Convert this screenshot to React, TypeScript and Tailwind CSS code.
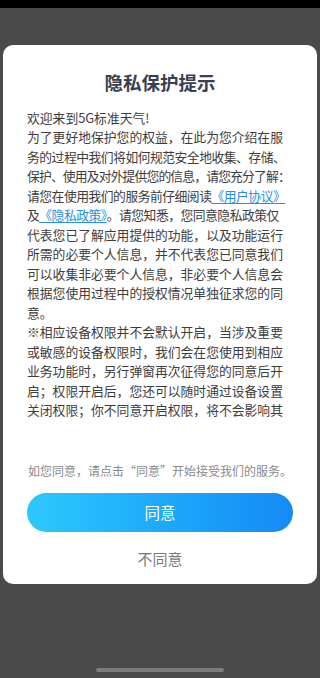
import React from 'react'

const font = { fontFamily: '"Noto Sans CJK SC", "Noto Sans", sans-serif' }

type Line = { text: React.ReactNode; tight?: 1 | 2 }

function Link({ children }: { children: React.ReactNode }) {
  return <span className="text-[#2b8ee0] underline underline-offset-2">{children}</span>
}

// lines broken as in the screenshot
const lines: Line[] = [
  { text: '欢迎来到5G标准天气!' },
  { text: '为了更好地保护您的权益，在此为您介绍在服' },
  { text: '务的过程中我们将如何规范安全地收集、存储、', tight: 1 },
  { text: '保护、使用及对外提供您的信息，请您充分了解：', tight: 2 },
  {
    text: (
      <>
        请您在使用我们的服务前仔细阅读<Link>《用户协议》</Link>
      </>
    ),
    tight: 1,
  },
  {
    text: (
      <>
        及<Link>《隐私政策》</Link>。请您知悉，您同意隐私政策仅
      </>
    ),
    tight: 1,
  },
  { text: '代表您已了解应用提供的功能，以及功能运行' },
  { text: '所需的必要个人信息，并不代表您已同意我们' },
  { text: '可以收集非必要个人信息，非必要个人信息会' },
  { text: '根据您使用过程中的授权情况单独征求您的同' },
  { text: '意。' },
  { text: '※相应设备权限并不会默认开启，当涉及重要' },
  { text: '或敏感的设备权限时，我们会在您使用到相应' },
  { text: '业务功能时，另行弹窗再次征得您的同意后开' },
  { text: '启；权限开启后，您还可以随时通过设备设置' },
  { text: '关闭权限；你不同意开启权限，将不会影响其' },
]

export default function App() {
  return (
    <div className="flex h-[678px] w-[320px] flex-col overflow-hidden bg-[#4a4a4a]" style={font}>
      <div className="h-[8px] bg-black" />

      <div className="mx-[3px] mt-[37px] flex h-[539px] flex-col rounded-[10px] bg-white px-[24px] pt-[25px]">
        <h1 className="text-center text-[18.5px] font-bold leading-[24px] text-[#3a3f4f]">隐私保护提示</h1>

        <div className="mt-[13.5px] h-[312px] overflow-hidden text-[12.8px] leading-[19.5px] text-[#3d3d3d]">
          {lines.map((l, i) => (
            <div
              key={i}
              className={
                l.tight === 2
                  ? 'whitespace-nowrap tracking-[-0.85px]'
                  : l.tight === 1
                    ? 'whitespace-nowrap tracking-[-0.5px]'
                    : 'whitespace-nowrap'
              }
            >
              {l.text}
            </div>
          ))}
        </div>

        <p className="mt-[42.5px] whitespace-nowrap text-center text-[12px] leading-[18px] text-[#8a8a8a]">
          如您同意，请点击“同意”开始接受我们的服务。
        </p>

        <button className="mt-[13px] h-[39px] w-full rounded-full bg-gradient-to-r from-[#2ec8fc] to-[#168af7] text-[15.5px] text-white">
          同意
        </button>

        <button className="mt-[17px] text-center text-[15px] leading-[20px] text-[#7a7a7a]">不同意</button>
      </div>

      <div className="flex flex-1 items-end justify-center pb-[6px]">
        <div className="h-[4px] w-[128px] rounded-full bg-[#7c7c7c]" />
      </div>
    </div>
  )
}
